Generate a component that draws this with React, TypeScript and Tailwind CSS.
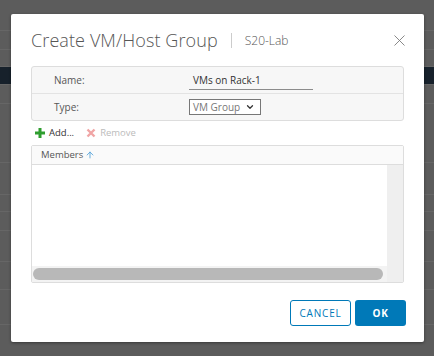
import { X, ArrowUp, ChevronDown } from "lucide-react";

const bgRows = [
  { h: "h-[31px]", cls: "" },
  { h: "h-[19px]", cls: "" },
  { h: "h-[17px]", cls: "" },
  { h: "h-[18px]", cls: "bg-[#17212b]" },
  { h: "h-[19px]", cls: "" },
  { h: "h-[59px]", cls: "" },
  { h: "h-[32px]", cls: "" },
  { h: "h-[17px]", cls: "" },
  { h: "h-[19px]", cls: "" },
  { h: "h-[31px]", cls: "" },
  { h: "h-[28px]", cls: "" },
  { h: "h-[35px]", cls: "" },
];

export default function App() {
  return (
    <div
      className="relative w-[434px] h-[356px] overflow-hidden bg-[#5c5c5c]"
      style={{ fontFamily: "'Open Sans', 'Liberation Sans', sans-serif" }}
    >
      {/* page behind the dialog */}
      <div className="flex flex-col">
        {bgRows.map((r, i) => (
          <div key={i} className={`${r.h} ${r.cls} border-b border-[#666666]`} />
        ))}
        <div className="flex h-[20px] items-center text-[10px] text-[#2e2e2e]">
          <span className="ml-[124px]">VCLASS\S20</span>
          <span className="ml-[150px]">5 ms</span>
        </div>
      </div>

      {/* dialog */}
      <div className="absolute left-[11px] top-[14px] w-[413px] h-[328px] bg-white rounded-[2px] shadow-[0_1px_3px_rgba(0,0,0,0.4)] flex flex-col px-[20px]">
        <div className="flex items-center h-[52px] pt-[1px]">
          <h1 className="text-[18px] font-light text-[#565656] tracking-[0.1px]">Create VM/Host Group</h1>
          <div className="ml-[13px] w-px h-[15px] bg-[#cccccc]" />
          <span className="ml-[13px] text-[12px] font-light text-[#565656]">S20-Lab</span>
          <X className="ml-auto mr-[-5px] w-[19px] h-[19px] text-[#777777]" strokeWidth={1.1} />
        </div>

        <div className="border border-[#dddddd] rounded-[3px] bg-[#f7f7f7] text-[10px] text-[#565656]">
          <div className="flex items-center h-[27px] border-b border-[#e3e3e3]">
            <span className="ml-[22px] w-[135px]">Name:</span>
            <div className="w-[124px] border-b border-[#8c8c8c] pl-[4px] pb-[1px] mt-[2px] text-[#333333]">VMs on Rack-1</div>
          </div>
          <div className="flex items-center h-[26px]">
            <span className="ml-[22px] w-[135px]">Type:</span>
            <div className="w-[72px] h-[16px] border border-[#777777] bg-white flex items-center pl-[3px] text-[#777777]">
              <span>VM Group</span>
              <ChevronDown className="ml-auto mr-[5px] w-[10px] h-[10px] text-[#333333]" strokeWidth={3} />
            </div>
          </div>
        </div>

        <div className="flex items-center h-[24px] text-[9.5px] pl-[4px]">
          <svg width="10" height="10" viewBox="0 0 10 10">
            <path d="M3.5 0h3v3.5H10v3H6.5V10h-3V6.5H0v-3h3.5z" fill="#2f9e2f" />
          </svg>
          <span className="ml-[4px] text-[#333333]">Add...</span>
          <svg className="ml-[12px]" width="10" height="10" viewBox="0 0 10 10">
            <path d="M1.5 1.5l7 7M8.5 1.5l-7 7" stroke="#f0a5a5" strokeWidth="2.4" />
          </svg>
          <span className="ml-[4px] text-[#bbbbbb]">Remove</span>
        </div>

        <div className="border border-[#dddddd] rounded-[2px] h-[138px] flex flex-col">
          <div className="h-[19px] bg-[#fafafa] border-b border-[#dddddd] flex items-center pl-[9px] text-[9.5px] text-[#565656]">
            Members
            <ArrowUp className="ml-[2px] w-[10px] h-[10px] text-[#4a9fd8]" strokeWidth={2} />
          </div>
          <div className="flex-1 flex">
            <div className="flex-1 flex flex-col">
              <div className="flex-1 bg-white" />
              <div className="h-[16px] bg-[#f3f3f3] flex items-center px-[1px]">
                <div className="w-[350px] h-[12px] rounded-full bg-[#b8b8b8]" />
              </div>
            </div>
            <div className="w-[16px] bg-[#efefef]" />
          </div>
        </div>

        <div className="flex justify-end items-center gap-[4px] mt-[17px] mr-[-2px]">
          <button className="w-[61px] h-[26px] border border-[#0079b8] rounded-[3px] text-[10px] text-[#0079b8] tracking-[0.8px] bg-white">
            CANCEL
          </button>
          <button className="w-[51px] h-[26px] rounded-[3px] bg-[#0079b8] text-[10px] font-bold text-white tracking-[0.8px]">
            OK
          </button>
        </div>
      </div>
    </div>
  );
}
